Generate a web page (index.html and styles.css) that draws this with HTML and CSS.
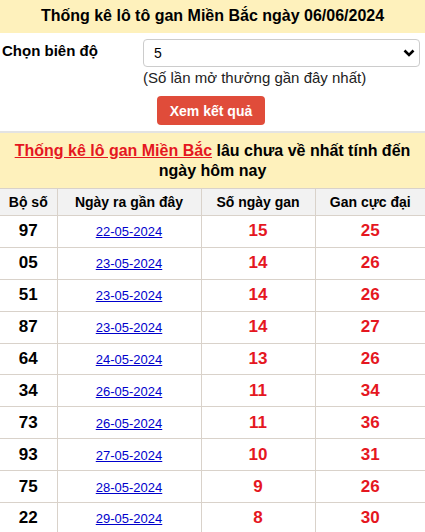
FILE: index.html
```html
<!DOCTYPE html>
<html lang="vi">
<head>
<meta charset="utf-8">
<title>Thống kê lô tô gan Miền Bắc</title>
<link rel="stylesheet" href="styles.css">
</head>
<body>
<h1 class="title">Thống kê lô tô gan Miền Bắc ngày 06/06/2024</h1>
<form class="filter">
  <div class="filter-row">
    <label class="filter-label" for="bd">Chọn biên độ</label>
    <div class="filter-field">
      <div class="select-wrap">
        <select id="bd" class="select"><option>5</option></select>
        <svg class="chev" width="12" height="8" viewBox="0 0 12 8"><path d="M1.5 1.5 L6 6 L10.5 1.5" fill="none" stroke="#000" stroke-width="2.6"/></svg>
      </div>
      <div class="hint">(Số lần mở thưởng gần đây nhất)</div>
    </div>
  </div>
  <div class="btn-row"><button type="button" class="btn">Xem kết quả</button></div>
</form>
<div class="sep"></div>
<div class="notice"><a href="#" class="notice-link">Thống kê lô gan Miền Bắc</a> lâu chưa về nhất tính đến ngày hôm nay</div>
<table class="gan">
  <colgroup><col class="c1"><col class="c2"><col class="c3"><col class="c4"></colgroup>
  <thead>
    <tr><th>Bộ số</th><th>Ngày ra gần đây</th><th>Số ngày gan</th><th>Gan cực đại</th></tr>
  </thead>
  <tbody>
    <tr><td class="num">97</td><td><a href="#" class="date">22-05-2024</a></td><td class="red">15</td><td class="red">25</td></tr>
    <tr><td class="num">05</td><td><a href="#" class="date">23-05-2024</a></td><td class="red">14</td><td class="red">26</td></tr>
    <tr><td class="num">51</td><td><a href="#" class="date">23-05-2024</a></td><td class="red">14</td><td class="red">26</td></tr>
    <tr><td class="num">87</td><td><a href="#" class="date">23-05-2024</a></td><td class="red">14</td><td class="red">27</td></tr>
    <tr><td class="num">64</td><td><a href="#" class="date">24-05-2024</a></td><td class="red">13</td><td class="red">26</td></tr>
    <tr><td class="num">34</td><td><a href="#" class="date">26-05-2024</a></td><td class="red">11</td><td class="red">34</td></tr>
    <tr><td class="num">73</td><td><a href="#" class="date">26-05-2024</a></td><td class="red">11</td><td class="red">36</td></tr>
    <tr><td class="num">93</td><td><a href="#" class="date">27-05-2024</a></td><td class="red">10</td><td class="red">31</td></tr>
    <tr><td class="num">75</td><td><a href="#" class="date">28-05-2024</a></td><td class="red">9</td><td class="red">26</td></tr>
    <tr><td class="num">22</td><td><a href="#" class="date">29-05-2024</a></td><td class="red">8</td><td class="red">30</td></tr>
  </tbody>
</table>
</body>
</html>
```
FILE: styles.css
```css
* { box-sizing: border-box; }
html, body { margin: 0; padding: 0; background: #fff; }
body {
  font-family: Arial, "Liberation Sans", sans-serif;
  color: #000;
  width: 425px;
  overflow: hidden;
}
.title {
  margin: 0;
  height: 33px;
  background: #fef1bc;
  font-size: 16px;
  font-weight: bold;
  text-align: center;
  line-height: 32px;
}
.filter { padding: 6px 5px 0 2px; }
.filter-row { display: flex; }
.filter-label {
  width: 141px;
  font-size: 15px;
  font-weight: bold;
  padding-top: 3px;
}
.filter-field { flex: 1; }
.select-wrap { position: relative; }
.select {
  display: block;
  width: 100%;
  height: 28px;
  appearance: none;
  -webkit-appearance: none;
  border: 1px solid #ccc;
  border-radius: 4px;
  background: #fff;
  font-family: Arial, "Liberation Sans", sans-serif;
  font-size: 14px;
  color: #000;
  padding: 0 10px;
}
.chev { position: absolute; right: 5px; top: 10px; pointer-events: none; }
.hint {
  font-size: 15px;
  color: #222;
  margin-top: 2px;
  line-height: 18px;
}
.btn-row { padding: 9px 0 0 155px; }
.btn {
  width: 108px;
  height: 29px;
  border: none;
  border-radius: 4px;
  background: #e04c3a;
  color: #fff;
  font-family: Arial, "Liberation Sans", sans-serif;
  font-size: 14px;
  font-weight: bold;
  padding: 0;
}
.sep { height: 2px; background: #e3e3e3; margin-top: 6px; }
.notice {
  background: #fef1bc;
  text-align: center;
  font-size: 16px;
  font-weight: bold;
  line-height: 20px;
  padding: 8px 12px 7px;
}
.notice-link { color: #e5171f; }
.gan {
  width: 425px;
  border-collapse: collapse;
  table-layout: fixed;
}
.c1 { width: 57px; }
.c2 { width: 144px; }
.c3 { width: 114px; }
.c4 { width: 110px; }
.gan th, .gan td {
  border: 1px solid #d9d2ca;
  text-align: center;
  padding: 0;
}
.gan tr > :first-child { border-left: none; }
.gan tr > :last-child { border-right: none; }
.gan th {
  background: #f2f2f2;
  height: 27px;
  font-size: 14px;
  font-weight: bold;
}
.gan td { height: 31.9px; }
.num { font-size: 17px; font-weight: bold; }
.red { font-size: 17px; font-weight: bold; color: #e5171f; }
.date { font-size: 13px; color: #0000cc; }
```
